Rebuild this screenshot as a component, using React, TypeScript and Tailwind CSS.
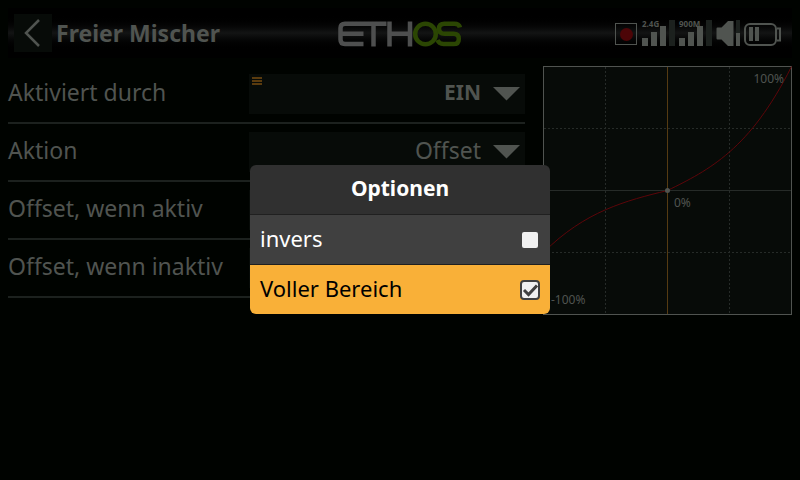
import { useState } from "react";

const inputBox = "h-10 w-[276px] bg-[#070b08] text-right";

function Field({ label, id, children }: { label: string; id: string; children: React.ReactNode }) {
  return (
    <div className="flex items-center justify-between border-b-2 border-[#1c211e] py-2">
      <label htmlFor={id} className="pb-1 whitespace-nowrap">
        {label}
      </label>
      {children}
    </div>
  );
}

function Dropdown({ id, options, bold, marker }: { id: string; options: string[]; bold?: boolean; marker?: boolean }) {
  return (
    <div className="relative">
      <select
        id={id}
        className={`${inputBox} block appearance-none pr-11 pb-1 [text-align-last:right] ${bold ? "text-[21px] font-bold" : "font-normal"}`}
      >
        {options.map((o) => (
          <option key={o}>{o}</option>
        ))}
      </select>
      {marker && (
        <svg className="pointer-events-none absolute top-[3px] left-[3px]" width="10" height="8" fill="#5a3b0e">
          <path d="M0 0h10v2H0zM0 3h10v2H0zM0 6h10v2H0z" />
        </svg>
      )}
      <svg className="pointer-events-none absolute top-[13px] right-[5px]" width="27" height="14" fill="#505450">
        <path d="M0 0h27L13.500 13.500z" />
      </svg>
    </div>
  );
}

function Logo() {
  return (
    <svg role="img" aria-label="ETHOS" width="124" height="28" viewBox="0 -2 124 28" fill="none" strokeWidth="4.500">
      <g stroke="#4e4f4f">
        <path d="M48.500 2.700H7Q2.500 2.700 2.500 7V18.500Q2.500 23 7 23H25.500M4 12.800H25.500M35.500 2.700V25.500M51.500 .5V25.500M72 .5V25.500M51.500 12.800H72" />
      </g>
      <g stroke="#2b4603">
        <circle cx="87.500" cy="13" r="10.300" />
        <path d="M122 6.500Q121 2.700 116.500 2.700H106.500Q101 2.700 101 7.700T106.500 12.800H115.500Q120.800 12.800 120.800 17.900T115.500 23H105.500Q101 23 99.500 19" />
      </g>
    </svg>
  );
}

function Signal({ name }: { name: string }) {
  return (
    <svg role="img" aria-label={name} width="33" height="28" viewBox="0 0 33 28" className="overflow-visible">
      <path d="M0 20h6v8H0zM9 14h6v14H9zM18 8h6v20H18z" fill="#505450" />
      <path d="M27 2h6v26h-6z" fill="#1c211e" />
      <text x="0" y="9" fontSize="8" fontWeight="700" fill="#505450">
        {name}
      </text>
    </svg>
  );
}

function StatusIcons() {
  return (
    <div className="flex items-center gap-1 pr-1 pb-[2px]">
      <svg width="23" height="28" viewBox="0 0 23 28">
        <rect x=".5" y="5.500" width="21" height="21" fill="none" stroke="#505450" />
        <circle cx="11.500" cy="16.500" r="6.500" fill="#4c0507" />
      </svg>
      <Signal name="2.4G" />
      <Signal name="900M" />
      <svg width="25" height="28" viewBox="0 0 25 28">
        <path d="M.5 10.500Q.5 9.500 1.500 9.500H5.500L12 3H17.500V28H12L5.500 21.500H1.500Q.5 21.500 .5 20.500z" fill="#505450" />
        <path d="M20 2h4v13h-4z" fill="#1c211e" />
        <path d="M20 15h4v13h-4z" fill="#505450" />
      </svg>
      <svg width="37" height="28" viewBox="0 0 37 28" fill="none" stroke="#505450" strokeWidth="2" className="overflow-visible">
        <rect x="0" y="6" width="31" height="21" rx="5" />
        <path d="M32 10.500h3v12h-3" />
        <path d="M4 9h4v14H4zM10 9h4v14h-4z" fill="#505450" stroke="none" />
      </svg>
    </div>
  );
}

function CurveChart() {
  return (
    <svg role="img" aria-label="Kurve" className="shrink-0" width="249" height="249" viewBox="0 0 249 249" fill="none">
      <rect x=".5" y=".5" width="248" height="248" fill="#070b08" />
      <path d="M62.500 1V248M186.500 1V248M1 62.500H248M1 186.500H248" stroke="#262b28" strokeDasharray="2 2" />
      <path d="M0 124.500H249" stroke="#262b28" />
      <path d="M124.500 0V249" stroke="#553b12" />
      <rect x=".5" y=".5" width="248" height="248" stroke="#505450" />
      <path d="M.5 186.500C42 145 83 134.700 124.500 124.500C166 104 207 83.500 248.500 .5" stroke="#5c0508" />
      <circle cx="124.500" cy="124.500" r="2.500" fill="#505450" />
      <g fill="#505450" fontSize="12">
        <text x="241" y="17" textAnchor="end">100%</text>
        <text x="131" y="141">0%</text>
        <text x="8" y="238">-100%</text>
      </g>
    </svg>
  );
}

function Option({ label, defaultChecked, selected }: { label: string; defaultChecked: boolean; selected?: boolean }) {
  const [checked, setChecked] = useState(defaultChecked);
  return (
    <label
      className={`flex h-[50px] items-center justify-between border-t border-[#202020] px-[10px] ${selected ? "bg-[#f9b038] text-black" : "bg-[#404040] text-white"}`}
    >
      <span className="pb-1">{label}</span>
      <span className="relative">
        <input
          type="checkbox"
          checked={checked}
          onChange={(e) => setChecked(e.target.checked)}
          className="block size-5 appearance-none rounded border-2 border-[#404040] bg-[#f0f0f0]"
        />
        {checked && (
          <svg className="pointer-events-none absolute inset-0" width="20" height="20" viewBox="0 0 20 20" fill="none" stroke="#404040" strokeWidth="3">
            <path d="M4 10L8.500 14.500L17 5.500" />
          </svg>
        )}
      </span>
    </label>
  );
}

export default function App() {
  return (
    <div className="min-h-screen bg-[#000300] font-['Noto_Sans',sans-serif] text-[23px] leading-8 text-[#505450]">
      <header className="px-2 py-2">
        <div className="grid h-[50px] grid-cols-[1fr_auto_1fr] items-center bg-linear-to-b from-black from-12% via-[#131414] via-50% to-black to-88% px-[6px]">
          <div className="flex items-center gap-1">
            <button aria-label="Zurück" className="size-[38px] bg-[#070b08]">
              <svg width="38" height="38" fill="none" stroke="#505450" strokeWidth="2.500">
                <path d="M25 6L12 19L25 32" />
              </svg>
            </button>
            <h1 className="font-bold whitespace-nowrap">Freier Mischer</h1>
          </div>
          <Logo />
          <div className="flex justify-end">
            <StatusIcons />
          </div>
        </div>
      </header>

      <main className="flex items-start gap-[18px] px-2">
        <form className="flex-1">
          <Field label="Aktiviert durch" id="source">
            <Dropdown id="source" options={["EIN"]} bold marker />
          </Field>
          <Field label="Aktion" id="action">
            <Dropdown id="action" options={["Offset"]} />
          </Field>
          <Field label="Offset, wenn aktiv" id="offset-on">
            <input id="offset-on" className={inputBox} />
          </Field>
          <Field label="Offset, wenn inaktiv" id="offset-off">
            <input id="offset-off" className={inputBox} />
          </Field>
        </form>
        <CurveChart />
      </main>

      <div className="fixed inset-0 flex items-center justify-center pb-px">
        <section role="dialog" aria-labelledby="dialog-title" className="w-[300px] overflow-hidden rounded-md text-[22px]">
          <h2
            id="dialog-title"
            className="flex h-[49px] items-center justify-center bg-[#303030] pb-1 text-[21px] font-bold text-white"
          >
            Optionen
          </h2>
          <Option label="invers" defaultChecked={false} />
          <Option label="Voller Bereich" defaultChecked selected />
        </section>
      </div>
    </div>
  );
}
